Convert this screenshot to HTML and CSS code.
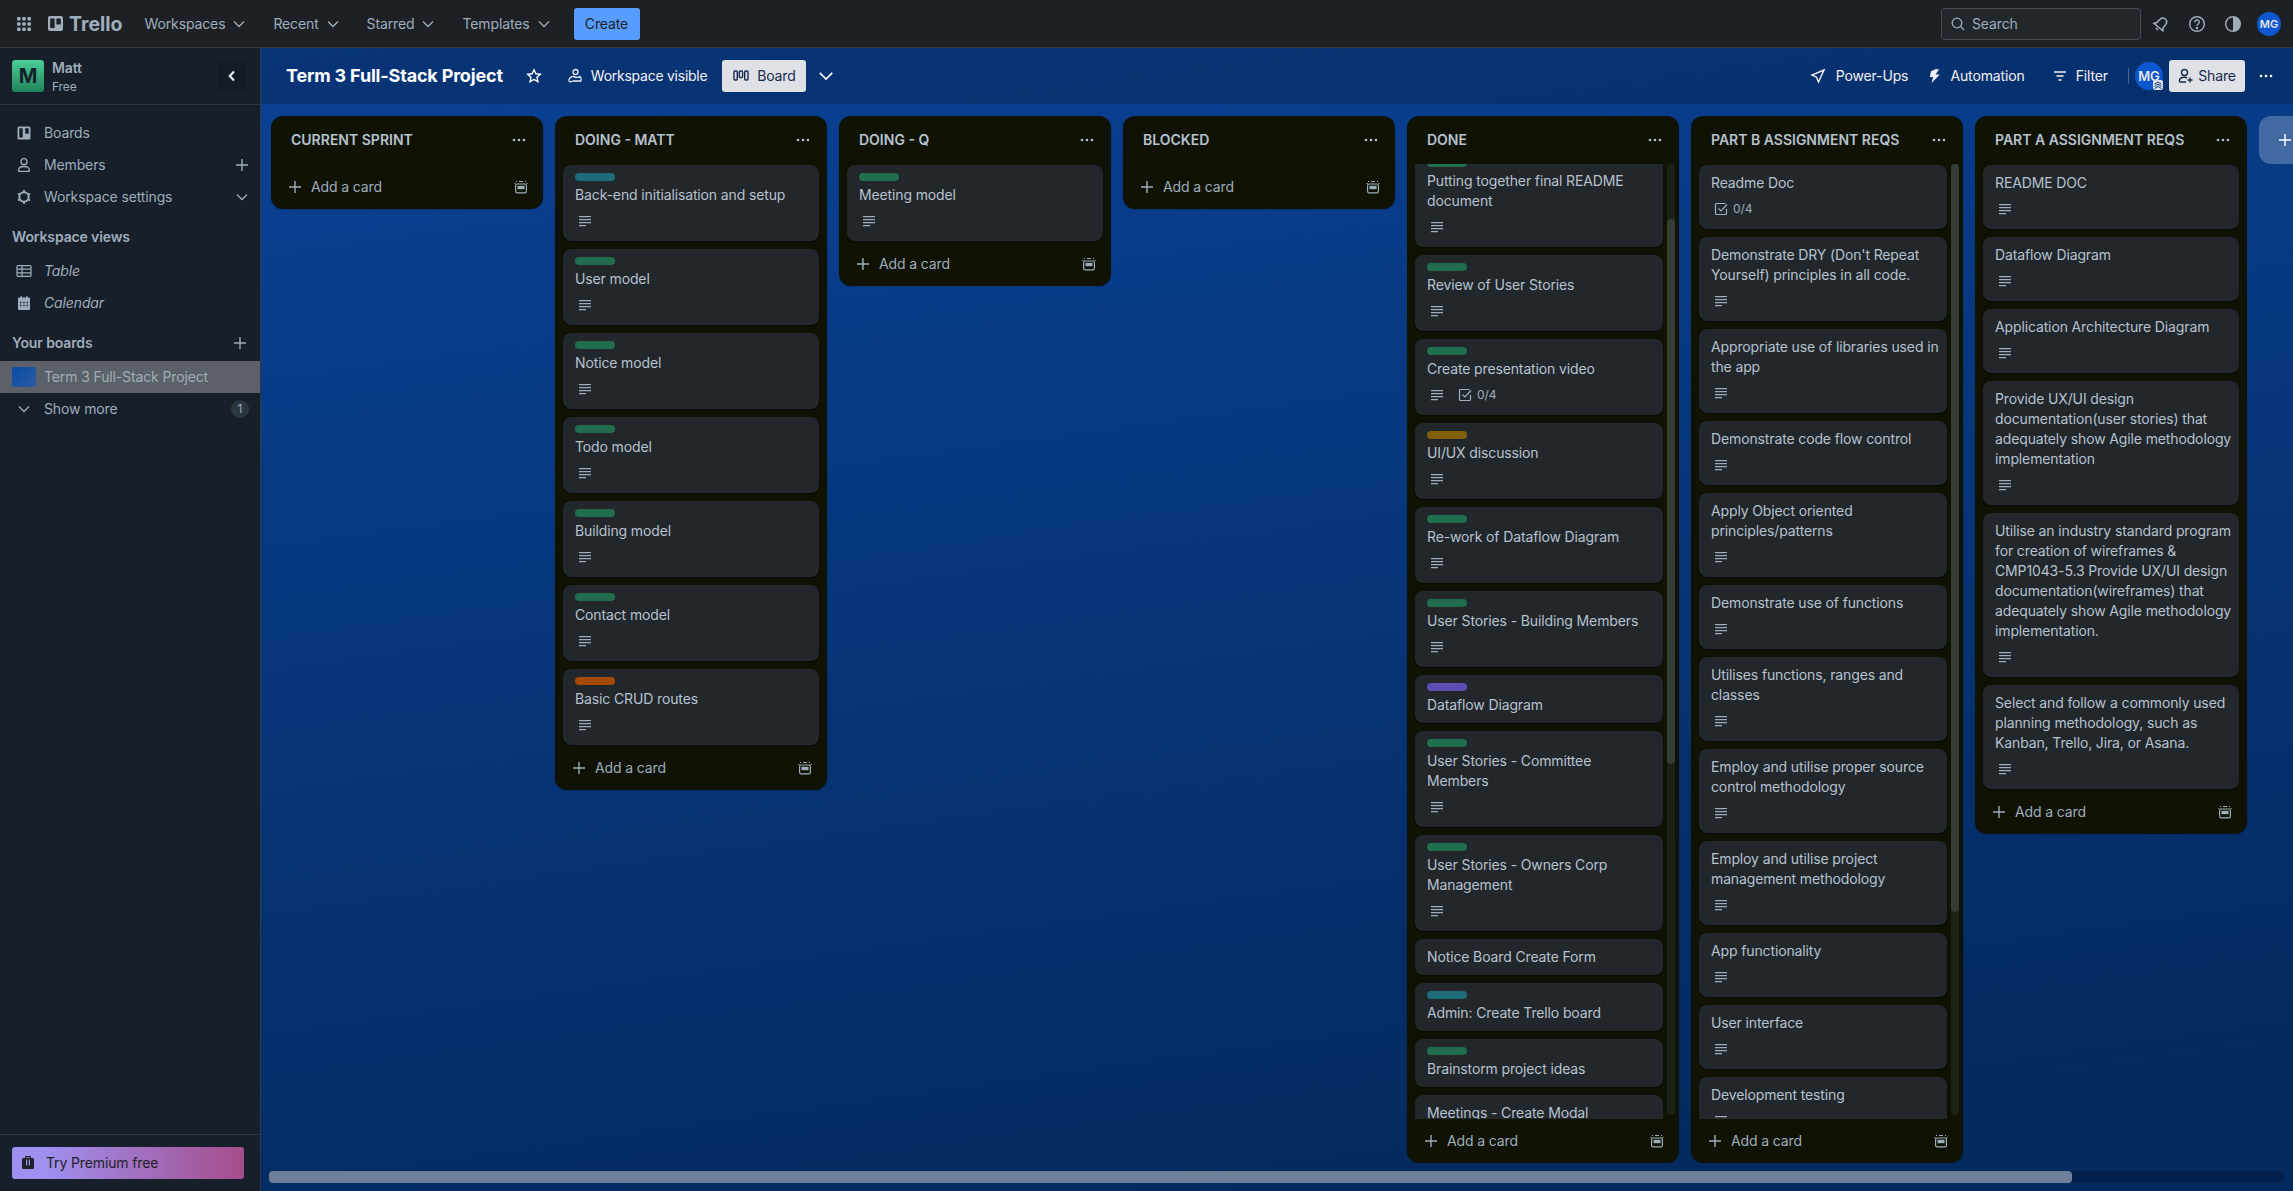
FILE: index.html
```html
<!DOCTYPE html>
<html lang="en">
<head>
  <meta charset="UTF-8">
  <title>Term 3 Full-Stack Project | Trello</title>
  <link rel="stylesheet" href="styles.css">
</head>
<body>

  <svg class="sprites" width="0" height="0">
    <symbol id="i-desc" viewBox="0 0 16 16"><path d="M2 3h12v1.2H2zM2 6h12v1.2H2zM2 9h12v1.2H2zM2 12h7v1.2H2z" fill="currentColor"/></symbol>
    <symbol id="i-check" viewBox="0 0 16 16"><path d="M13.5 8v4.5a1 1 0 0 1-1 1h-9a1 1 0 0 1-1-1v-9a1 1 0 0 1 1-1h9" fill="none" stroke="currentColor" stroke-width="1.2"/><path d="M5.5 7.5 8 10l6-6.5" fill="none" stroke="currentColor" stroke-width="1.2"/></symbol>
    <symbol id="i-plus" viewBox="0 0 16 16"><path d="M8 2v12M2 8h12" fill="none" stroke="currentColor" stroke-width="1.4"/></symbol>
    <symbol id="i-template" viewBox="0 0 16 16"><path d="M3 2.5h1M6 2.5h4M12 2.5h1M2 4v1M14 4v1" fill="none" stroke="currentColor" stroke-width="1.2"/><rect x="2.6" y="5" width="10.8" height="8.8" rx="1.6" fill="none" stroke="currentColor" stroke-width="1.2"/><rect x="4.5" y="6.8" width="7" height="3.4" fill="currentColor"/></symbol>
    <symbol id="i-chev" viewBox="0 0 16 16"><path d="M3 5.5 8 10.5l5-5" fill="none" stroke="currentColor" stroke-width="1.3"/></symbol>
    <symbol id="i-dots" viewBox="0 0 16 16"><circle cx="3" cy="8" r="1.3" fill="currentColor"/><circle cx="8" cy="8" r="1.3" fill="currentColor"/><circle cx="13" cy="8" r="1.3" fill="currentColor"/></symbol>
  </svg>

  <header class="topbar">
    <svg class="grid-icon" width="14" height="14" viewBox="0 0 14 14" fill="currentColor">
      <rect width="3.6" height="3.6" rx="1"/><rect x="5.2" width="3.6" height="3.6" rx="1"/><rect x="10.4" width="3.6" height="3.6" rx="1"/>
      <rect y="5.2" width="3.6" height="3.6" rx="1"/><rect x="5.2" y="5.2" width="3.6" height="3.6" rx="1"/><rect x="10.4" y="5.2" width="3.6" height="3.6" rx="1"/>
      <rect y="10.4" width="3.6" height="3.6" rx="1"/><rect x="5.2" y="10.4" width="3.6" height="3.6" rx="1"/><rect x="10.4" y="10.4" width="3.6" height="3.6" rx="1"/>
    </svg>
    <div class="logo">
      <svg width="15" height="15" viewBox="0 0 15 15"><path fill-rule="evenodd" d="M2 0h11a2 2 0 0 1 2 2v11a2 2 0 0 1-2 2H2a2 2 0 0 1-2-2V2a2 2 0 0 1 2-2zm.8 2.5a.6.6 0 0 0-.6.6v8.3a.6.6 0 0 0 .6.6h3.2a.6.6 0 0 0 .6-.6V3.1a.6.6 0 0 0-.6-.6zm6.2 0a.6.6 0 0 0-.6.6v4.8a.6.6 0 0 0 .6.6h3.2a.6.6 0 0 0 .6-.6V3.1a.6.6 0 0 0-.6-.6z" fill="currentColor"/></svg>
      <span>Trello</span>
    </div>
    <nav class="topnav">
      <span class="topnav-item">Workspaces <svg width="16" height="16"><use href="#i-chev"/></svg></span>
      <span class="topnav-item">Recent <svg width="16" height="16"><use href="#i-chev"/></svg></span>
      <span class="topnav-item">Starred <svg width="16" height="16"><use href="#i-chev"/></svg></span>
      <span class="topnav-item">Templates <svg width="16" height="16"><use href="#i-chev"/></svg></span>
    </nav>
    <button class="create-btn">Create</button>
    <div class="topbar-right">
      <div class="search">
        <svg width="16" height="16" viewBox="0 0 16 16" fill="none" stroke="currentColor" stroke-width="1.3"><circle cx="7" cy="7" r="4.8"/><path d="m10.5 10.5 3.5 3.5"/></svg>
        <span>Search</span>
      </div>
      <svg class="top-icon" width="18" height="18" viewBox="0 0 18 18" fill="none" stroke="currentColor" stroke-width="1.5"><g transform="rotate(40 9 9)"><path d="M9 2.500C6.300 2.500 5 4.500 5 7v3.500L3.200 13h11.600L13 10.500V7c0-2.500-1.300-4.500-4-4.500zM7.500 15.500h3"/></g></svg>
      <svg class="top-icon" width="18" height="18" viewBox="0 0 18 18" fill="none" stroke="currentColor" stroke-width="1.4"><circle cx="9" cy="9" r="7.300"/><path d="M6.800 7.200a2.200 2.200 0 1 1 3.400 1.800c-.8.500-1.200 1-1.200 1.800"/><circle cx="9" cy="13" r=".6" fill="currentColor"/></svg>
      <svg class="top-icon top-icon-last" width="18" height="18" viewBox="0 0 18 18"><circle cx="9" cy="9" r="7.300" fill="none" stroke="currentColor" stroke-width="1.400"/><path d="M9 1.700a7.300 7.300 0 0 1 0 14.600z" fill="currentColor"/></svg>
      <div class="avatar avatar-top">MG</div>
    </div>
  </header>

  <div class="layout">
    <aside class="sidebar">
      <div class="side-head">
        <div class="ws-logo">M</div>
        <div class="ws-name">
          <strong>Matt</strong>
          <span>Free</span>
        </div>
        <div class="collapse-btn">
          <svg width="16" height="16" viewBox="0 0 16 16" fill="none" stroke="currentColor" stroke-width="2.200"><path d="M10 3.500 5.800 8l4.200 4.500"/></svg>
        </div>
      </div>

      <div class="side-nav">
        <div class="side-item">
          <svg width="16" height="16" viewBox="0 0 16 16"><path fill-rule="evenodd" d="M3 1.500h10A1.500 1.500 0 0 1 14.500 3v10a1.500 1.500 0 0 1-1.500 1.500H3A1.500 1.500 0 0 1 1.500 13V3A1.500 1.500 0 0 1 3 1.500zm.300 1.700v9.300h3.400V3.200zm5.900 0v5.600h3.500V3.200z" fill="currentColor"/></svg>
          <span>Boards</span>
        </div>
        <div class="side-item">
          <svg width="16" height="16" viewBox="0 0 16 16" fill="none" stroke="currentColor" stroke-width="1.300"><circle cx="8" cy="4.700" r="3"/><path d="M2.700 14.300v-1.500C2.700 10.500 5 9.500 8 9.500s5.300 1 5.300 3.300v1.500z"/></svg>
          <span>Members</span>
          <svg class="side-action" width="16" height="16"><use href="#i-plus"/></svg>
        </div>
        <div class="side-item">
          <svg width="16" height="16" viewBox="0 0 16 16" fill="none" stroke="currentColor" stroke-width="2"><circle cx="8" cy="8" r="4.700"/><path d="M8 1v2M8 13v2M2 4.500l1.500 1M12.500 10.500l1.500 1M2 11.500l1.500-1M12.500 5.500l1.500-1" stroke-width="1.800"/></svg>
          <span>Workspace settings</span>
          <svg class="side-action" width="16" height="16"><use href="#i-chev"/></svg>
        </div>

        <h4 class="side-title">Workspace views</h4>
        <div class="side-item">
          <svg width="16" height="16" viewBox="0 0 16 16" fill="none" stroke="currentColor" stroke-width="1.200"><rect x="1" y="2.600" width="14" height="10.800" rx="1"/><path d="M1 6.200h14M1 9.800h14M6 2.600v10.800"/></svg>
          <em>Table</em>
        </div>
        <div class="side-item">
          <svg width="16" height="16" viewBox="0 0 16 16"><path fill-rule="evenodd" d="M3 2.500h1.500V1h1.300v1.500h4.400V1h1.300v1.500H13A1 1 0 0 1 14 3.500V14a1 1 0 0 1-1 1H3a1 1 0 0 1-1-1V3.500a1 1 0 0 1 1-1zm1 4.200h1.500v1.500H4zm3.200 0h1.500v1.500H7.200zm3.300 0H12v1.500h-1.500zM4 9.800h1.500v1.500H4zm3.200 0h1.500v1.500H7.200zm3.300 0H12v1.500h-1.500z" fill="currentColor"/></svg>
          <em>Calendar</em>
        </div>

        <h4 class="side-title side-title-boards">Your boards
          <svg class="side-action" width="16" height="16"><use href="#i-plus"/></svg>
        </h4>
        <div class="side-item side-board">
          <div class="board-thumb"></div>
          <span>Term 3 Full-Stack Project</span>
        </div>
        <div class="side-item">
          <svg width="16" height="16"><use href="#i-chev"/></svg>
          <span>Show more</span>
          <b class="count">1</b>
        </div>
      </div>

      <div class="side-foot">
        <button class="premium-btn">
          <svg width="16" height="16" viewBox="0 0 16 16"><path fill-rule="evenodd" d="M5 3V2.200C5 1.500 5.500 1 6.200 1h3.600c.7 0 1.200.5 1.200 1.200V3h1.500A1.500 1.500 0 0 1 14 4.500v8a1.500 1.500 0 0 1-1.500 1.500h-9A1.500 1.500 0 0 1 2 12.500v-8A1.500 1.500 0 0 1 3.500 3zm1.200 0h3.600v-.8H6.200zM6 4.500v6h1.200v-6zm2.800 0v6H10v-6z" fill="currentColor"/></svg>
          Try Premium free
        </button>
      </div>
    </aside>

    <main class="board">
      <div class="board-bar">
        <h1 class="board-title">Term 3 Full-Stack Project</h1>
        <svg class="star" width="16" height="16" viewBox="0 0 16 16" fill="none" stroke="currentColor" stroke-width="1.400"><path d="m8 1.800 1.900 4 4.400.5-3.300 3 .9 4.400L8 11.500l-3.900 2.200.9-4.400-3.300-3 4.400-.5z"/></svg>
        <span class="bar-link visible-link">
          <svg width="16" height="16" viewBox="0 0 16 16" fill="none" stroke="currentColor" stroke-width="1.300"><circle cx="8.500" cy="4" r="2.500"/><path d="M5.500 8.500c-2 .5-4 2.500-3.500 4.500.5 1 2.500 1 3 0M6 8c1.500 2 6 1.500 7 .5 1 1 1.500 3 1 4.500H5.500"/></svg>
          Workspace visible
        </span>
        <button class="board-btn">
          <svg width="16" height="16" viewBox="0 0 16 16" fill="none" stroke="currentColor" stroke-width="1.400"><rect x="1" y="3" width="3.300" height="9" rx="1"/><rect x="6.300" y="3" width="3.300" height="6.500" rx="1"/><rect x="11.700" y="3" width="3.300" height="9" rx="1"/></svg>
          Board
        </button>
        <svg class="view-chev" width="20" height="20" viewBox="0 0 16 16"><use href="#i-chev"/></svg>

        <div class="bar-right">
          <span class="bar-link powerups-link">
            <svg width="16" height="16" viewBox="0 0 16 16" fill="none" stroke="currentColor" stroke-width="1.400"><path d="M14 2 2 7l4.500 2.200L8.500 14z"/></svg>
            Power-Ups
          </span>
          <span class="bar-link">
            <svg class="bolt" width="14" height="16" viewBox="0 0 14 16"><path d="M8 1 3 3.200 1.800 9H5l-1.300 6 8-8.500H7.500l3.500-5z" fill="currentColor"/></svg>
            Automation
          </span>
          <span class="bar-link filter-link">
            <svg width="16" height="16" viewBox="0 0 16 16" fill="none" stroke="currentColor" stroke-width="1.300"><path d="M2 4h12M4.500 8h7M6.500 12h3"/></svg>
            Filter
          </span>
          <span class="bar-divider"></span>
          <div class="avatar avatar-bar">MG
            <svg class="admin-badge" width="10" height="10" viewBox="0 0 10 10" fill="none" stroke="#0c3b7c" stroke-width="1"><rect width="10" height="10" rx="2" fill="#dfe1e6" stroke="none"/><path d="M1.500 4.200 5 2l3.500 2.200M1.500 6.400 5 4.200l3.500 2.200M1.500 8.600 5 6.400l3.500 2.200"/></svg>
          </div>
          <button class="share-btn">
            <svg width="16" height="16" viewBox="0 0 16 16" fill="none" stroke="currentColor" stroke-width="1.400"><circle cx="6.500" cy="4.500" r="3"/><path d="M1.500 14v-1.500c0-2 2-3.200 5-3.200 1 0 2 .2 2.700.5M1.500 14H8M12 9.500v5M9.500 12h5"/></svg>
            Share
          </button>
          <svg class="bar-dots" width="16" height="16"><use href="#i-dots"/></svg>
        </div>
      </div>

      <div class="canvas">

        <section class="col">
          <div class="col-head"><h2>CURRENT SPRINT</h2><svg width="16" height="16"><use href="#i-dots"/></svg></div>
          <div class="list"></div>
          <div class="col-foot"><svg width="16" height="16"><use href="#i-plus"/></svg><span>Add a card</span><svg class="tpl" width="16" height="16"><use href="#i-template"/></svg></div>
        </section>

        <section class="col">
          <div class="col-head"><h2>DOING - MATT</h2><svg width="16" height="16"><use href="#i-dots"/></svg></div>
          <div class="list">
            <article class="card"><i class="label teal"></i><p>Back-end initialisation and setup</p><div class="badges"><svg width="16" height="16"><use href="#i-desc"/></svg></div></article>
            <article class="card"><i class="label green"></i><p>User model</p><div class="badges"><svg width="16" height="16"><use href="#i-desc"/></svg></div></article>
            <article class="card"><i class="label green"></i><p>Notice model</p><div class="badges"><svg width="16" height="16"><use href="#i-desc"/></svg></div></article>
            <article class="card"><i class="label green"></i><p>Todo model</p><div class="badges"><svg width="16" height="16"><use href="#i-desc"/></svg></div></article>
            <article class="card"><i class="label green"></i><p>Building model</p><div class="badges"><svg width="16" height="16"><use href="#i-desc"/></svg></div></article>
            <article class="card"><i class="label green"></i><p>Contact model</p><div class="badges"><svg width="16" height="16"><use href="#i-desc"/></svg></div></article>
            <article class="card"><i class="label orange"></i><p>Basic CRUD routes</p><div class="badges"><svg width="16" height="16"><use href="#i-desc"/></svg></div></article>
          </div>
          <div class="col-foot"><svg width="16" height="16"><use href="#i-plus"/></svg><span>Add a card</span><svg class="tpl" width="16" height="16"><use href="#i-template"/></svg></div>
        </section>

        <section class="col">
          <div class="col-head"><h2>DOING - Q</h2><svg width="16" height="16"><use href="#i-dots"/></svg></div>
          <div class="list">
            <article class="card"><i class="label green"></i><p>Meeting model</p><div class="badges"><svg width="16" height="16"><use href="#i-desc"/></svg></div></article>
          </div>
          <div class="col-foot"><svg width="16" height="16"><use href="#i-plus"/></svg><span>Add a card</span><svg class="tpl" width="16" height="16"><use href="#i-template"/></svg></div>
        </section>

        <section class="col">
          <div class="col-head"><h2>BLOCKED</h2><svg width="16" height="16"><use href="#i-dots"/></svg></div>
          <div class="list"></div>
          <div class="col-foot"><svg width="16" height="16"><use href="#i-plus"/></svg><span>Add a card</span><svg class="tpl" width="16" height="16"><use href="#i-template"/></svg></div>
        </section>

        <section class="col col-full">
          <div class="col-head"><h2>DONE</h2><svg width="16" height="16"><use href="#i-dots"/></svg></div>
          <div class="list list-scroll list-scrolled">
            <article class="card"><i class="label green"></i><p>Putting together final README document</p><div class="badges"><svg width="16" height="16"><use href="#i-desc"/></svg></div></article>
            <article class="card"><i class="label green"></i><p>Review of User Stories</p><div class="badges"><svg width="16" height="16"><use href="#i-desc"/></svg></div></article>
            <article class="card"><i class="label green"></i><p>Create presentation video</p><div class="badges"><svg width="16" height="16"><use href="#i-desc"/></svg><span class="check"><svg width="16" height="16"><use href="#i-check"/></svg>0/4</span></div></article>
            <article class="card"><i class="label yellow"></i><p>UI/UX discussion</p><div class="badges"><svg width="16" height="16"><use href="#i-desc"/></svg></div></article>
            <article class="card"><i class="label green"></i><p>Re-work of Dataflow Diagram</p><div class="badges"><svg width="16" height="16"><use href="#i-desc"/></svg></div></article>
            <article class="card"><i class="label green"></i><p>User Stories - Building Members</p><div class="badges"><svg width="16" height="16"><use href="#i-desc"/></svg></div></article>
            <article class="card"><i class="label purple"></i><p>Dataflow Diagram</p></article>
            <article class="card"><i class="label green"></i><p>User Stories - Committee Members</p><div class="badges"><svg width="16" height="16"><use href="#i-desc"/></svg></div></article>
            <article class="card"><i class="label green"></i><p>User Stories - Owners Corp Management</p><div class="badges"><svg width="16" height="16"><use href="#i-desc"/></svg></div></article>
            <article class="card"><p>Notice Board Create Form</p></article>
            <article class="card"><i class="label teal"></i><p>Admin: Create Trello board</p></article>
            <article class="card"><i class="label green"></i><p>Brainstorm project ideas</p></article>
            <article class="card"><p>Meetings - Create Modal</p></article>
          </div>
          <div class="track"><div class="thumb thumb-done"></div></div>
          <div class="col-foot"><svg width="16" height="16"><use href="#i-plus"/></svg><span>Add a card</span><svg class="tpl" width="16" height="16"><use href="#i-template"/></svg></div>
        </section>

        <section class="col col-full">
          <div class="col-head"><h2>PART B ASSIGNMENT REQS</h2><svg width="16" height="16"><use href="#i-dots"/></svg></div>
          <div class="list list-scroll">
            <article class="card"><p>Readme Doc</p><div class="badges"><span class="check"><svg width="16" height="16"><use href="#i-check"/></svg>0/4</span></div></article>
            <article class="card"><p>Demonstrate DRY (Don't Repeat Yourself) principles in all code.</p><div class="badges"><svg width="16" height="16"><use href="#i-desc"/></svg></div></article>
            <article class="card"><p>Appropriate use of libraries used in the app</p><div class="badges"><svg width="16" height="16"><use href="#i-desc"/></svg></div></article>
            <article class="card"><p>Demonstrate code flow control</p><div class="badges"><svg width="16" height="16"><use href="#i-desc"/></svg></div></article>
            <article class="card"><p>Apply Object oriented principles/patterns</p><div class="badges"><svg width="16" height="16"><use href="#i-desc"/></svg></div></article>
            <article class="card"><p>Demonstrate use of functions</p><div class="badges"><svg width="16" height="16"><use href="#i-desc"/></svg></div></article>
            <article class="card"><p>Utilises functions, ranges and classes</p><div class="badges"><svg width="16" height="16"><use href="#i-desc"/></svg></div></article>
            <article class="card"><p>Employ and utilise proper source control methodology</p><div class="badges"><svg width="16" height="16"><use href="#i-desc"/></svg></div></article>
            <article class="card"><p>Employ and utilise project management methodology</p><div class="badges"><svg width="16" height="16"><use href="#i-desc"/></svg></div></article>
            <article class="card"><p>App functionality</p><div class="badges"><svg width="16" height="16"><use href="#i-desc"/></svg></div></article>
            <article class="card"><p>User interface</p><div class="badges"><svg width="16" height="16"><use href="#i-desc"/></svg></div></article>
            <article class="card"><p>Development testing</p><div class="badges"><svg width="16" height="16"><use href="#i-desc"/></svg></div></article>
          </div>
          <div class="track"><div class="thumb thumb-partb"></div></div>
          <div class="col-foot"><svg width="16" height="16"><use href="#i-plus"/></svg><span>Add a card</span><svg class="tpl" width="16" height="16"><use href="#i-template"/></svg></div>
        </section>

        <section class="col">
          <div class="col-head"><h2>PART A ASSIGNMENT REQS</h2><svg width="16" height="16"><use href="#i-dots"/></svg></div>
          <div class="list list-wide">
            <article class="card"><p>README DOC</p><div class="badges"><svg width="16" height="16"><use href="#i-desc"/></svg></div></article>
            <article class="card"><p>Dataflow Diagram</p><div class="badges"><svg width="16" height="16"><use href="#i-desc"/></svg></div></article>
            <article class="card"><p>Application Architecture Diagram</p><div class="badges"><svg width="16" height="16"><use href="#i-desc"/></svg></div></article>
            <article class="card"><p>Provide UX/UI design documentation(user stories) that adequately show Agile methodology implementation</p><div class="badges"><svg width="16" height="16"><use href="#i-desc"/></svg></div></article>
            <article class="card"><p>Utilise an industry standard program for creation of wireframes &amp; CMP1043-5.3 Provide UX/UI design documentation(wireframes) that adequately show Agile methodology implementation.</p><div class="badges"><svg width="16" height="16"><use href="#i-desc"/></svg></div></article>
            <article class="card"><p>Select and follow a commonly used planning methodology, such as Kanban, Trello, Jira, or Asana.</p><div class="badges"><svg width="16" height="16"><use href="#i-desc"/></svg></div></article>
          </div>
          <div class="col-foot"><svg width="16" height="16"><use href="#i-plus"/></svg><span>Add a card</span><svg class="tpl" width="16" height="16"><use href="#i-template"/></svg></div>
        </section>

        <div class="add-list"><svg width="16" height="16"><use href="#i-plus"/></svg></div>
      </div>

      <div class="hscroll"><div class="hscroll-thumb"></div></div>
    </main>
  </div>

</body>
</html>
```

FILE: styles.css
```css
* {
  box-sizing: border-box;
}

html, body {
  height: 100%;
}

body {
  margin: 0;
  overflow: hidden;
  display: flex;
  flex-direction: column;
  font-family: Inter, "Noto Sans", sans-serif;
  font-size: 14px;
  line-height: 20px;
  letter-spacing: -0.13px;
  color: #9fadbc;
  background: #1d2125;
}

.sprites {
  position: absolute;
}

button {
  font: inherit;
  letter-spacing: inherit;
  border: none;
}

svg {
  flex: none;
  display: block;
}

/* top bar */
.topbar {
  flex: none;
  height: 48px;
  display: flex;
  align-items: center;
  padding: 0 12px 0 17px;
  background: #1d2125;
  border-bottom: 1px solid #31383f;
}

.logo {
  display: flex;
  align-items: center;
  gap: 6px;
  margin-left: 17px;
  font-size: 19.5px;
  font-weight: 700;
  letter-spacing: 0;
}

.topnav {
  display: flex;
  gap: 26px;
  margin-left: 22px;
}

.topnav-item {
  display: flex;
  align-items: center;
  gap: 6px;
}

.create-btn {
  margin-left: 22px;
  width: 66px;
  height: 32px;
  border-radius: 3px;
  background: #579dff;
  color: #1d2125;
}

.topbar-right {
  margin-left: auto;
  display: flex;
  align-items: center;
}

.search {
  width: 200px;
  height: 32px;
  display: flex;
  align-items: center;
  gap: 6px;
  padding-left: 8px;
  background: #22272b;
  border: 1px solid #454f59;
  border-radius: 4px;
  margin-right: 11px;
}

.top-icon {
  margin-right: 18px;
}

.top-icon-last {
  margin-right: 15px;
}

.avatar {
  border-radius: 50%;
  background: #0c57d0;
  color: #e6e9ee;
  font-weight: 600;
  letter-spacing: 0;
  display: flex;
  align-items: center;
  justify-content: center;
}

.avatar-top {
  width: 24px;
  height: 24px;
  font-size: 11px;
}

/* sidebar */
.layout {
  flex: 1;
  min-height: 0;
  display: flex;
}

.sidebar {
  width: 261px;
  flex: none;
  display: flex;
  flex-direction: column;
  background: #161f2a;
  border-right: 1px solid #2d3b4f;
}

.side-head {
  height: 57px;
  display: flex;
  align-items: center;
  padding: 0 14px 0 12px;
  border-bottom: 1px solid #2f3842;
}

.ws-logo {
  width: 32px;
  height: 32px;
  border-radius: 3px;
  background: linear-gradient(#4bce97, #1f845a);
  color: #161f2a;
  font-size: 20px;
  font-weight: 700;
  display: flex;
  align-items: center;
  justify-content: center;
}

.ws-name {
  margin-left: 8px;
  display: flex;
  flex-direction: column;
}

.ws-name strong {
  font-weight: 600;
  line-height: 20px;
}

.ws-name span {
  font-size: 12px;
  line-height: 16px;
  margin-top: 1px;
}

.collapse-btn {
  margin-left: auto;
  width: 28px;
  height: 28px;
  border-radius: 3px;
  background: #131b25;
  color: #dfe7ef;
  display: flex;
  align-items: center;
  justify-content: center;
}

.side-nav {
  flex: 1;
  padding-top: 12px;
}

.side-item {
  height: 32px;
  display: flex;
  align-items: center;
  gap: 12px;
  padding: 0 10px 0 16px;
}

.side-item em {
  font-style: italic;
}

.side-action {
  margin-left: auto;
}

.side-title {
  margin: 8px 0 2px;
  height: 32px;
  padding: 0 12px;
  display: flex;
  align-items: center;
  font-size: 14px;
  font-weight: 600;
}

.side-title-boards {
  margin: 6px 0 0;
  height: 36px;
}

.side-board {
  background: #5c6068;
  padding-left: 12px;
  gap: 8px;
}

.board-thumb {
  width: 24px;
  height: 20px;
  border-radius: 2px;
  background: linear-gradient(135deg, #0a4aa8, #2b5da0);
}

.count {
  margin-left: auto;
  margin-right: 1px;
  width: 18px;
  height: 18px;
  border-radius: 50%;
  background: #2c3640;
  font-size: 12px;
  font-weight: 400;
  text-align: center;
  line-height: 18px;
}

.side-foot {
  height: 57px;
  padding: 12px 16px 0 12px;
  border-top: 1px solid #2f3842;
}

.premium-btn {
  width: 100%;
  height: 32px;
  display: flex;
  align-items: center;
  gap: 10px;
  padding: 0 8px;
  border-radius: 3px;
  background: linear-gradient(90deg, #9f8fef 15%, #a54d8a);
  color: #1d2125;
}

/* board */
.board {
  flex: 1;
  min-width: 0;
  display: flex;
  flex-direction: column;
  background: linear-gradient(172deg, #0a4296, #042a5f 90%);
}

.board-bar {
  flex: none;
  height: 56px;
  display: flex;
  align-items: center;
  padding-left: 25px;
  padding-right: 19px;
  background: rgba(0, 0, 0, 0.2);
  color: #fff;
}

.board-title {
  margin: 0;
  font-size: 18px;
  line-height: 32px;
  font-weight: 700;
  letter-spacing: -0.18px;
}

.star {
  margin-left: 23px;
}

.bar-link {
  display: flex;
  align-items: center;
  gap: 8px;
  color: #f1f2f4;
}

.visible-link {
  margin-left: 25px;
  letter-spacing: -0.25px;
}

.board-btn {
  margin-left: 15px;
  width: 84px;
  height: 32px;
  display: flex;
  align-items: center;
  justify-content: center;
  gap: 8px;
  border-radius: 3px;
  background: #dfe1e6;
  color: #172b4d;
}

.view-chev {
  margin-left: 10px;
}

.bar-right {
  margin-left: auto;
  display: flex;
  align-items: center;
}

.bar-right .bar-link {
  margin-right: 27px;
}

.bar-right .powerups-link {
  margin-right: 20px;
  gap: 10px;
}

.bar-right .filter-link {
  margin-right: 20px;
}

.bar-divider {
  width: 1px;
  height: 16px;
  background: rgba(255, 255, 255, 0.25);
  margin-right: 6px;
}

.avatar-bar {
  position: relative;
  width: 28px;
  height: 28px;
  font-size: 13px;
}

.admin-badge {
  position: absolute;
  right: 0;
  bottom: 0;
}

.share-btn {
  margin-left: 6px;
  width: 76px;
  height: 32px;
  display: flex;
  align-items: center;
  justify-content: center;
  gap: 4px;
  border-radius: 3px;
  background: #dfe1e6;
  color: #172b4d;
}

.bar-dots {
  margin-left: 13px;
}

/* columns */
.canvas {
  flex: 1;
  min-height: 0;
  display: flex;
  align-items: flex-start;
  gap: 12px;
  padding: 12px 0 0 10px;
  overflow: hidden;
}

.col {
  position: relative;
  flex: none;
  width: 272px;
  max-height: 100%;
  display: flex;
  flex-direction: column;
  background: #101204;
  border-radius: 12px;
  box-shadow: 0 1px 1px #091e4240, 0 0 1px #091e424f;
}

.col-full {
  height: 1047px;
}

.col-head {
  flex: none;
  height: 48px;
  display: flex;
  align-items: center;
  justify-content: space-between;
  padding: 0 16px 0 20px;
  color: #b6c2cf;
}

.col-head h2 {
  margin: 0;
  font-size: 14px;
  font-weight: 600;
  letter-spacing: 0;
}

.list {
  flex: 1;
  min-height: 0;
  display: flex;
  flex-direction: column;
  gap: 8px;
  padding: 1px 8px;
  overflow: hidden;
}

.list:empty {
  padding-bottom: 0;
}

.list-scroll {
  padding-right: 16px;
}

.list-scrolled {
  padding-top: 0;
}

.list-scrolled .card:first-child {
  margin-top: -13px;
}

.card {
  flex: none;
  padding: 8px 8px 8px 12px;
  background: #22272b;
  border-radius: 8px;
  color: #b6c2cf;
  box-shadow: 0 1px 1px #03040480, 0 0 1px #03040480;
}

.list-wide .card {
  padding-right: 4px;
}

.card p {
  margin: 0;
}

.label {
  display: block;
  width: 40px;
  height: 8px;
  margin-bottom: 4px;
  border-radius: 4px;
}

.green { background: #216e4e; }
.teal { background: #206b7a; }
.yellow { background: #7f5f01; }
.orange { background: #a54800; }
.purple { background: #5e4db2; }

.badges {
  display: flex;
  align-items: center;
  gap: 12px;
  height: 24px;
  margin-top: 4px;
  margin-left: 2px;
  color: #9fadbc;
}

.check {
  display: flex;
  align-items: center;
  gap: 4px;
  font-size: 12px;
}

.col-foot {
  flex: none;
  height: 44px;
  display: flex;
  align-items: center;
  gap: 8px;
  padding: 0 14px 0 16px;
}

.tpl {
  margin-left: auto;
}

.track {
  position: absolute;
  right: 4px;
  width: 8px;
  top: 48px;
  bottom: 48px;
  border-radius: 4px;
  background: #1c2116;
}

.thumb {
  position: absolute;
  left: 0;
  right: 0;
  border-radius: 4px;
  background: #333d36;
}

.thumb-done {
  top: 55px;
  height: 545px;
}

.thumb-partb {
  top: 0;
  height: 748px;
}

.add-list {
  flex: none;
  width: 272px;
  height: 48px;
  padding: 16px 0 0 18px;
  border-radius: 12px;
  background: rgba(255, 255, 255, 0.24);
  color: #fff;
}

/* horizontal scrollbar */
.hscroll {
  flex: none;
  height: 12px;
  margin: 8px 9px 8px 8px;
  border-radius: 4px;
  background: rgba(0, 0, 0, 0.2);
}

.hscroll-thumb {
  width: 1803px;
  height: 100%;
  border-radius: 4px;
  background: #6e7f99;
}
```
